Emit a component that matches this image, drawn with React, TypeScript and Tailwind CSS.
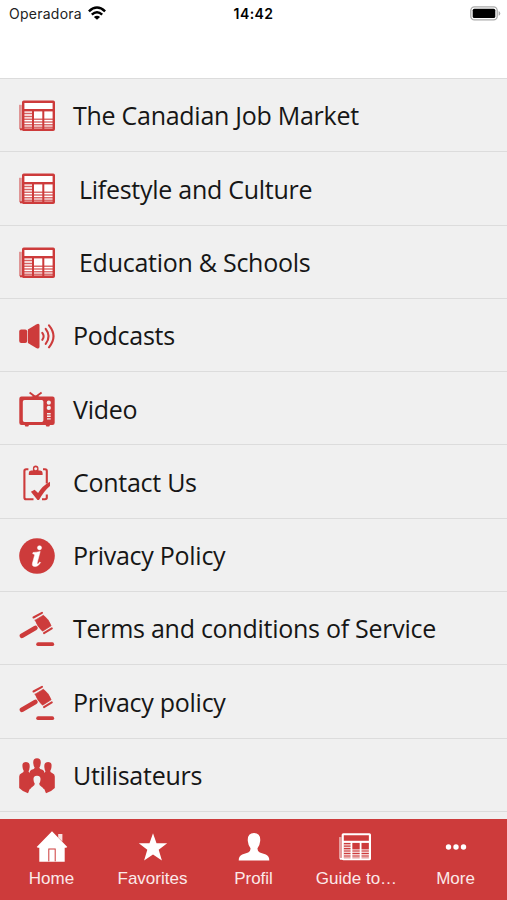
import type { ReactNode } from "react";

type IconProps = { className?: string };

const NewspaperIcon = ({ className, paper = "#fff" }: IconProps & { paper?: string }) => (
  <svg viewBox="0 0 36 36" className={className} fill="none" stroke="currentColor">
    <path d="M1.4 6.8v24.4" strokeWidth="2.8" opacity="0.5" />
    <path d="M1 31.3h4" strokeWidth="2" />
    <rect x="4.2" y="3.7" width="30.6" height="28.1" rx="0.6" strokeWidth="2.4" fill={paper} />
    <path d="M4 12.2h31" strokeWidth="2.4" />
    <path d="M14 12.2v20M24.3 12.2v20" strokeWidth="2" />
    <path d="M5 15.6h9M5 18.4h9" strokeWidth="1.5" opacity="0.8" />
    <path d="M5 21.2h30M5 24h30M5 26.7h30M5 29.4h30" strokeWidth="1.6" opacity="0.75" />
  </svg>
);

const SpeakerIcon = ({ className }: IconProps) => (
  <svg viewBox="0 0 36 36" className={className} fill="currentColor">
    <rect x="0.2" y="11.6" width="8" height="13.4" rx="2" />
    <path d="M8.9 11.4 17.2 6.4q3.3-1.6 3.3 1.2v21.2q0 2.8-3.3 1.2L8.9 25z" />
    <g fill="none" stroke="currentColor" strokeWidth="2.1" strokeLinecap="round">
      <path d="M23.3 14.8q2.8 3.5 0 7" />
      <path d="M26.7 10.8q5.8 7.5 0 15" />
      <path d="M30 7.3q9 11 0 22" />
    </g>
  </svg>
);

const TvIcon = ({ className }: IconProps) => (
  <svg viewBox="0 0 36 36" className={className} fill="currentColor">
    <path d="M10.6 1.6 16.5 6 22.6 1.6" fill="none" stroke="currentColor" strokeWidth="1.9" />
    <path d="M12 6.2q4.6-3.4 9.2 0z" />
    <path
      fillRule="evenodd"
      d="M2.5 5.6h31q2.2 0 2.2 2.2v24q0 2.2-2.2 2.2h-2.5l-.8 1.5h-2.8l-.8-1.5H10l-.8 1.5H6.4l-.8-1.5H2.5q-2.2 0-2.2-2.2v-24q0-2.2 2.2-2.2zM5.5 9Q3.8 9 3.8 10.700v18.500Q3.800 31 5.500 31h17.200q1.700 0 1.700-1.800V10.700Q24.400 9 22.700 9z"
    />
    <g fill="#f0f0f0">
      <circle cx="29.8" cy="11.7" r="2.1" />
      <circle cx="29.8" cy="16.9" r="2.1" />
      <path d="M28 22h3.7v1.4H28zM28 24.6h3.7v1.4H28zM28 27.2h3.7v1.4H28z" />
    </g>
  </svg>
);

const ClipboardIcon = ({ className }: IconProps) => (
  <svg viewBox="0 0 36 36" className={className} fill="currentColor">
    <path
      d="M14.5 34.2H7.2q-1.8 0-1.8-1.8V6Q5.4 4.3 7.2 4.3H9.4M24 4.3h2q1.8 0 1.8 1.7v12.5M27.8 29.5v3q0 1.7-1.8 1.7h-3"
      fill="none"
      stroke="currentColor"
      strokeWidth="2.1"
    />
    <path
      fillRule="evenodd"
      d="M9.8 9.9V7.9q0-2.5 2.3-2.5h1.8V3.3Q14 .5 16.7.5t2.8 2.8v2.1h1.8q2.3 0 2.3 2.5v2zM16.7 2.2a1.5 1.5 0 1 0 .01 0z"
    />
    <path d="m11.9 26.8 3.7-2.1 3.5 3.4Q23.2 20.7 31 16.7v4.2Q24.6 26.3 20 35h-1.5z" />
  </svg>
);

const InfoIcon = ({ className }: IconProps) => (
  <svg viewBox="0 0 36 36" className={className}>
    <circle cx="18" cy="18" r="17.8" fill="currentColor" />
    <g fill="#fff" stroke="#fff" strokeWidth="0.5">
      <circle cx="20.5" cy="9.8" r="2.1" />
      <path d="M14 14.5q3.6-.2 7.2-1L18.3 24.3q-.5 2 .5 1.8.8-.3 1.9-2.1l.9.6q-2.4 4-5.4 4-3.6 0-2.7-3.6l2.1-7.7q.4-1.5-1.9-1.500z" />
    </g>
  </svg>
);

const GavelIcon = ({ className }: IconProps) => (
  <svg viewBox="0 0 36 36" className={className} fill="currentColor" stroke="currentColor" strokeLinecap="round">
    <path d="M3 24.8 16.3 16.9" strokeWidth="4.7" />
    <path d="M14.5 6.5 23 1.8M25 22.1 32.8 17.4" strokeWidth="2" />
    <path d="m16.2 9.2 8.2-5q5.400 4 7.700 10.600l-8.500 5.400q-5.300-4.600-7.400-11z" strokeWidth="0.7" />
    <path d="M19.1 33.2h14.2" strokeWidth="3.7" />
  </svg>
);

const UsersIcon = ({ className }: IconProps) => (
  <svg viewBox="0 0 36 36" className={className}>
    <g fill="currentColor">
      <path d="M3.5 9Q2.7 4.1 6.9 4.1T10.7 9q-.3 3-1.2 4.2 0 1.3 2.5 2.2l2.5 1.6-1.5 11-1.7 1.7-2.3 5.5Q4 34 .2 30V18.5q0-2.5 2.3-3.3 2.2-.8 2.3-2.2Q3.8 11.8 3.5 9z" />
      <path d="M32.5 9q.8-4.9-3.4-4.9T25.3 9q.3 3 1.2 4.2 0 1.3-2.5 2.2L21.5 17 23 28l1.7 1.7 2.3 5.5q5-1.2 8.8-5.2V18.5q0-2.5-2.3-3.3-2.2-.8-2.3-2.2 1-1.2 1.3-4z" />
      <path d="M14.3 5.5Q13.6.3 18 .3t3.7 5.2q-.3 3-1.4 4.2.2 1.4 3.2 2.1 2 .8 2 3.2v16h-15V15q0-2.400 2-3.200 3-.7 3.200-2.100-1.100-1.200-1.400-4.200z" />
    </g>
    <path
      d="M14.5 21.7q-.4-4 3.5-4t3.500 4q-.3 3-1.300 4.100.1 1.500 2 2.600 2.300 1.200 2.800 3.300l1 4.300H10l1-4.300q.5-2.100 2.800-3.300 1.900-1.100 2-2.600-1-1.100-1.300-4.100z"
      fill="#f0f0f0"
    />
  </svg>
);

const HomeIcon = ({ className }: IconProps) => (
  <svg viewBox="0 0 32 32" className={className} fill="currentColor">
    <path d="M22.2 3h4.2v7.5l-4.2-4z" opacity="0.85" />
    <path
      fillRule="evenodd"
      d="M16 .2 31.3 16l-1.2.8H28.7v14H3.3v-14H1.9L.7 16zM12.3 17.6v12.7h1V18.6h5.4v11.7h1V17.6z"
    />
  </svg>
);

const StarIcon = ({ className }: IconProps) => (
  <svg viewBox="0 0 30 30" className={className} fill="currentColor">
    <path d="m15 1.3 3.5 9.9 10.7.1-8.5 6.4 3.2 10.8L15 22.4l-8.900 6.100 3.200-10.800L.8 11.300l10.700-.1z" />
  </svg>
);

const ProfileIcon = ({ className }: IconProps) => (
  <svg viewBox="0 0 32 30" className={className} fill="currentColor">
    <path d="M9.8 9Q9.2 1 16 1t6.2 8q-.4 4.5-2.7 7.2-.2 3.3 2.3 4.2l6 2.2Q31.3 24 31.3 28.5H.7q0-4.5 3.5-5.9l6-2.2q2.5-.9 2.3-4.2Q10.2 13.5 9.8 9z" />
  </svg>
);

const MoreIcon = ({ className }: IconProps) => (
  <svg viewBox="0 0 30 30" className={className} fill="currentColor">
    <circle cx="7.5" cy="15" r="2.7" />
    <circle cx="15" cy="15" r="2.7" />
    <circle cx="22.5" cy="15" r="2.7" />
  </svg>
);

const WifiIcon = ({ className }: IconProps) => (
  <svg viewBox="0 0 18 14" className={className} fill="none" stroke="currentColor" strokeWidth="2.5">
    <path d="M.9 5.3q8.100-7.600 16.200 0" />
    <path d="M3.8 8.6q5.200-4.700 10.400 0" />
    <path d="M9 13.8 5.9 10.9q3.1-2.500 6.200 0z" fill="currentColor" stroke="none" />
  </svg>
);

const BatteryIcon = ({ className }: IconProps) => (
  <svg viewBox="0 0 31 15" className={className}>
    <rect x="0.8" y="0.9" width="26.4" height="13" rx="3.6" fill="#fff" stroke="#aaa" strokeWidth="1.3" />
    <rect x="2.7" y="2.7" width="22.6" height="9.4" rx="1.6" fill="#000" />
    <path d="M28.6 5q1.700.8 1.700 2.400t-1.700 2.400z" fill="#aaa" />
  </svg>
);

const menuItems: { label: string; icon: ReactNode; indent?: boolean }[] = [
  { label: "The Canadian Job Market", icon: <NewspaperIcon className="size-9" /> },
  { label: "Lifestyle and Culture", icon: <NewspaperIcon className="size-9" />, indent: true },
  { label: "Education & Schools", icon: <NewspaperIcon className="size-9" />, indent: true },
  { label: "Podcasts", icon: <SpeakerIcon className="size-9" /> },
  { label: "Video", icon: <TvIcon className="size-9" /> },
  { label: "Contact Us", icon: <ClipboardIcon className="size-9" /> },
  { label: "Privacy Policy", icon: <InfoIcon className="size-9" /> },
  { label: "Terms and conditions of Service", icon: <GavelIcon className="size-9" /> },
  { label: "Privacy policy", icon: <GavelIcon className="size-9" /> },
  { label: "Utilisateurs", icon: <UsersIcon className="size-9" /> },
];

const tabs: { label: string; icon: ReactNode }[] = [
  { label: "Home", icon: <HomeIcon className="size-8" /> },
  { label: "Favorites", icon: <StarIcon className="size-[30px]" /> },
  { label: "Profil", icon: <ProfileIcon className="h-[30px] w-8" /> },
  { label: "Guide to…", icon: <NewspaperIcon className="size-8" paper="none" /> },
  { label: "More", icon: <MoreIcon className="size-[30px]" /> },
];

const StatusBar = () => (
  <header className="grid h-[78px] shrink-0 grid-cols-3 items-start bg-white px-[9px] pt-[3px] font-['Inter',sans-serif] text-black">
    <div className="flex h-5 items-center gap-[6px]">
      <span className="text-[14px] tracking-[0.25px] text-[#222]">Operadora</span>
      <WifiIcon className="h-[14px] w-[18px]" />
    </div>
    <span className="pt-px text-center text-[14px] leading-5 font-semibold tracking-[0.4px]">14:42</span>
    <BatteryIcon className="mt-[2.5px] mr-[-3px] h-[15px] w-[31px] justify-self-end" />
  </header>
);

export default function App() {
  return (
    <div className="flex h-[900px] w-[507px] flex-col overflow-hidden bg-[#f0f0f0]">
      <StatusBar />
      <main className="min-h-0 flex-1 overflow-hidden">
        <ul>
          {menuItems.map((item, i) => (
            <li
              key={i}
              className="flex h-[73.3px] items-center border-t border-[#dcdcdc] pt-[2px] pl-[19px] text-[#cd3b3b]"
            >
              {item.icon}
              <span
                className={`pb-[1.6px] font-['Open_Sans',sans-serif] text-[25px] leading-8 tracking-[-0.27px] whitespace-nowrap text-[#161616] ${
                  item.indent ? "ml-6" : "ml-[18px]"
                }`}
              >
                {item.label}
              </span>
            </li>
          ))}
          <li className="h-[73px] border-t border-[#dcdcdc]" />
        </ul>
      </main>
      <nav className="grid h-[81px] shrink-0 grid-cols-5 bg-[#cd3b3b] px-px pt-3 font-['Liberation_Sans',Arial,sans-serif] text-white">
        {tabs.map((tab) => (
          <div key={tab.label} className="flex flex-col items-center">
            <div className="flex h-8 items-center">{tab.icon}</div>
            <span
              className={`mt-[6px] text-[17px] leading-5 whitespace-nowrap text-[#fbe9e9] ${
                tab.label.endsWith("…") ? "pl-1" : ""
              }`}
            >
              {tab.label}
            </span>
          </div>
        ))}
      </nav>
    </div>
  );
}
